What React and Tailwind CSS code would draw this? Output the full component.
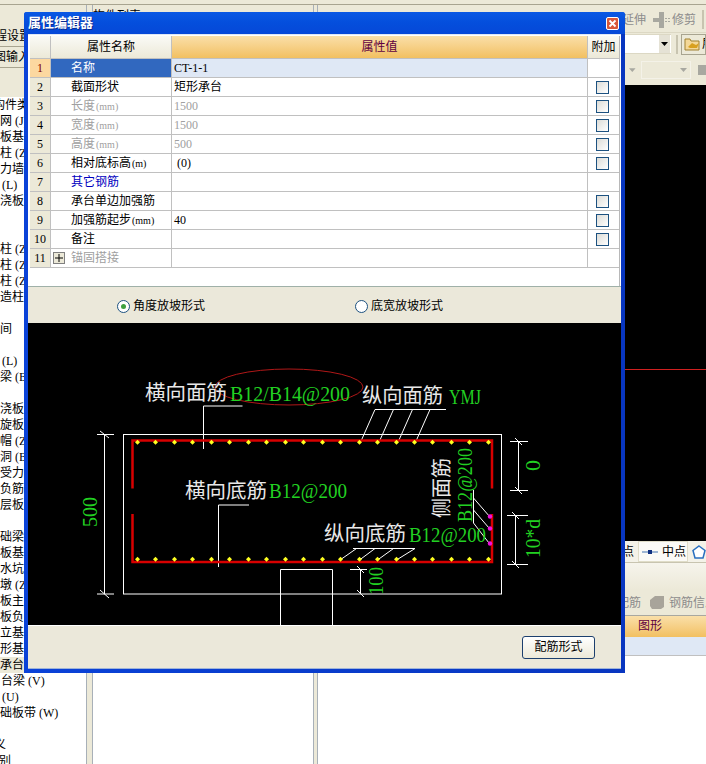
// 左侧构件树，dialog 盖住了右半边
const treeRows = [
  ['构件类型', -7], ['钢筋网 (J)', -24], ['现浇板基础', -24], ['框架柱 (Z)', -24], ['剪力墙', -12], ['(L)', 2], ['现浇板', -12], [''], [''],
  ['框架柱 (Z)', -24], ['暗柱 (Z)', -12], ['端柱 (Z)', -12], ['构造柱', -12], [''], ['空间', -12], [''],
  ['(L)', 2], ['连梁 (B)', -12], [''], ['现浇板', -12], ['螺旋板', -12], ['柱帽 (Z)', -12], ['板洞 (B)', -12], ['板受力', -12], ['板负筋', -12], ['楼层板', -12], [''],
  ['基础梁', -12], ['筏板基础', -12], ['集水坑', -12], ['柱墩 (Z)', -12], ['筏板主筋', -12], ['筏板负筋', -12], ['独立基础', -12], ['条形基础', -12], ['桩承台', -12, true],
  ['台梁 (V)', 1], ['桩 (U)', -13], ['基础板带 (W)', -12], [''], ['定义', -18], ['类别', -13],
]

const attrRows = [
  { no: 1, name: '名称', value: 'CT-1-1', selected: true },
  { no: 2, name: '截面形状', value: '矩形承台', check: true },
  { no: 3, name: '长度', unit: '(mm)', value: '1500', check: true, muted: true },
  { no: 4, name: '宽度', unit: '(mm)', value: '1500', check: true, muted: true },
  { no: 5, name: '高度', unit: '(mm)', value: '500', check: true, muted: true },
  { no: 6, name: '相对底标高', unit: '(m)', value: ' (0)', check: true },
  { no: 7, name: '其它钢筋', value: '', blue: true },
  { no: 8, name: '承台单边加强筋', value: '', check: true },
  { no: 9, name: '加强筋起步', unit: '(mm)', value: '40', check: true },
  { no: 10, name: '备注', value: '', check: true },
  { no: 11, name: '锚固搭接', value: '', muted: true, plus: true },
]

const dotsX = [137.5, 155.5, 174.5, 192.5, 211.5, 229.5, 248.5, 266.5, 285.5, 303.5, 322.5, 340.5, 359.5, 377.5, 396.5, 414.5, 432.5, 451.5, 469.5, 488.5]

function Checkbox() {
  return <div className="w-[13px] h-[13px] border border-[#1c5180] bg-gradient-to-br from-[#dcdcd7] to-white" />
}

function AttrRow({ row }) {
  const nameColor = row.selected ? 'bg-[#3168bf] text-white' : row.blue ? 'text-[#0000c0]' : row.muted ? 'text-[#a0a0a0]' : 'text-black'
  return (
    <div className={`flex h-[19px] border-b border-[#c0c0c0] text-[12px] leading-[19px] ${row.selected ? 'bg-[#dfe8f5]' : 'bg-white'}`}>
      <div className={`w-[21px] shrink-0 text-center ${row.selected ? 'bg-[#fcd8a0] text-[#800000]' : 'bg-[#ece9d8] text-black'} border-r border-[#c0c0c0]`}>{row.no}</div>
      <div className={`w-[121px] shrink-0 flex items-center border-r border-[#c0c0c0] ${nameColor}`}>
        <div className="w-[20px] shrink-0 pl-[2px]">
          {row.plus && (
            <div className="w-[12px] h-[12px] border border-[#808080] bg-[#ece9d8] flex items-center justify-center">
              <svg width="8" height="8" viewBox="0 0 8 8"><path d="M0 4H8M4 0V8" stroke="#000" strokeWidth="1" /></svg>
            </div>
          )}
        </div>
        <span className="whitespace-nowrap">{row.name}</span>
        {row.unit && <span className="ml-[1px] text-[10px] whitespace-nowrap">{row.unit}</span>}
      </div>
      <div className={`w-[416px] shrink-0 pl-[2px] whitespace-pre border-r border-[#c0c0c0] ${row.muted ? 'text-[#a0a0a0]' : 'text-black'}`}>{row.value}</div>
      <div className="flex-1 flex items-center justify-center bg-white pr-[2px]">{row.check && <Checkbox />}</div>
    </div>
  )
}

function Radio({ on, label }) {
  return (
    <div className="flex items-center gap-[3px] text-[12px] text-black">
      <div className="w-[13px] h-[13px] rounded-full border border-[#1c5180] bg-white flex items-center justify-center">
        {on && <div className="w-[5px] h-[5px] rounded-full bg-[#3fa03f]" />}
      </div>
      {label}
    </div>
  )
}

function Diagram() {
  const green = '#22d022'
  const cjk = { fill: '#e8e8e8', fontSize: 20.5 }
  const latin = { fill: green, fontSize: 22 }
  return (
    <svg className="block w-[593px] h-[302px]" viewBox="28 323 593 302">
      <rect x="28" y="323" width="593" height="302" fill="#000" />
      <g stroke="#fff" fill="none" strokeWidth="1">
        <rect x="123.5" y="434.5" width="378" height="159.5" />
        <path d="M203.5 406H242.5M203.5 406V449M218.5 505H249M218.5 505V567" />
        <path d="M375 409.5H446M375 409.5L361.5 440M393.5 409.5L380 440M412.5 409.5L399 440M430 409.5L416.5 440" />
        <path d="M353 548.5H415M356.5 548.5L340 560M375 548.5L359.5 560M393.5 548.5L377.5 560M415 548.5L396.5 560" />
        <path d="M280.5 625V569.5H332.5V625" />
        <path d="M104.5 434.5V594M97 434.5H114M97 594H114M100 431L109 438M100 590L109 598" />
        <path d="M518.5 441.5V490.5M510 441.5H528M510 490.5H528M515 438L522 445M515 487L522 494" />
        <path d="M515.5 515.5V564.5M507 515.5H528M507 564.5H528M512 512L519 519M512 561L519 568" />
        <path d="M360.5 569V594M350 569.5H367M357 566L364 573M357 590L364 597" />
        <path d="M473.5 490V523M473.5 498L490 517M473.5 510L489 528M473.5 523L489 543" />
      </g>
      <ellipse cx="289" cy="387" rx="74" ry="18" fill="none" stroke="#b01818" strokeWidth="1" />
      <path d="M132.5 488.5V440.5H492V488.5M132.5 514V562H492V514" fill="none" stroke="#d80000" strokeWidth="2.5" />
      {dotsX.map(x => (
        <g key={x} fill="#ffff20">
          <path d={`M${x} 439.8l2.5 2.5l-2.5 2.5l-2.5 -2.5z`} />
          <path d={`M${x} 556.8l2.5 2.5l-2.5 2.5l-2.5 -2.5z`} />
        </g>
      ))}
      {[516.5, 528.5, 543.5].map(y => <circle key={y} cx="490" cy={y} r="2.2" fill="#f010e0" />)}

      <text x="145" y="400" textLength="82" lengthAdjust="spacingAndGlyphs" {...cjk}>横向面筋</text>
      <text x="230" y="401" textLength="120" lengthAdjust="spacingAndGlyphs" {...latin}>B12/B14@200</text>
      <text x="362" y="403" textLength="81" lengthAdjust="spacingAndGlyphs" {...cjk}>纵向面筋</text>
      <text x="449" y="403.5" textLength="32" lengthAdjust="spacingAndGlyphs" {...latin}>YMJ</text>
      <text x="185" y="498" textLength="82" lengthAdjust="spacingAndGlyphs" {...cjk}>横向底筋</text>
      <text x="269" y="498" textLength="78" lengthAdjust="spacingAndGlyphs" {...latin}>B12@200</text>
      <text x="324" y="541" textLength="82" lengthAdjust="spacingAndGlyphs" {...cjk}>纵向底筋</text>
      <text x="409" y="541.5" textLength="77" lengthAdjust="spacingAndGlyphs" {...latin}>B12@200</text>

      <text transform="translate(449 518) rotate(-90)" textLength="60" lengthAdjust="spacingAndGlyphs" {...cjk}>侧面筋</text>
      <text transform="translate(471.5 522) rotate(-90)" textLength="74" lengthAdjust="spacingAndGlyphs" {...latin}>B12@200</text>
      <text transform="translate(97 527) rotate(-90)" textLength="30" lengthAdjust="spacingAndGlyphs" {...latin}>500</text>
      <text transform="translate(540 471) rotate(-90)" {...latin}>0</text>
      <text transform="translate(540 558) rotate(-90)" textLength="39" lengthAdjust="spacingAndGlyphs" {...latin}>10*d</text>
      <text transform="translate(383 595) rotate(-90)" textLength="28" lengthAdjust="spacingAndGlyphs" {...latin}>100</text>
    </svg>
  )
}

function PropertyDialog() {
  return (
    <div className="absolute left-[24px] top-[12px] w-[601px] h-[661px] flex flex-col rounded-t-[3px] bg-gradient-to-r from-[#0a42d8] to-[#0836c0] px-[4px] pb-[4px] shadow-[inset_0_1px_0_#3a7af0]">
      <div className="h-[22px] shrink-0 -mx-[4px] px-[4px] rounded-t-[3px] flex items-center justify-between bg-gradient-to-b from-[#0a58e4] via-[#044edc] to-[#0648d8]">
        <span className="text-[13px] font-bold text-white [text-shadow:1px_1px_0_#0a2a90]">属性编辑器</span>
        <div className="w-[13px] h-[13px] mr-[2px] rounded-[2px] border border-white bg-[#d8583a] flex items-center justify-center">
          <svg width="9" height="9" viewBox="0 0 9 9"><path d="M1.5 1.5L7.5 7.5M7.5 1.5L1.5 7.5" stroke="#fff" strokeWidth="1.8" /></svg>
        </div>
      </div>

      <div className="flex-1 flex flex-col bg-[#ebe8da] border-t border-[#dfe8f5] border-b border-b-[#9fb4d8] min-h-0">
        <div className="h-[252px] shrink-0 bg-white pl-[2px] pr-[1px] pt-[1px] border-b border-[#9fb0a8]">
          <div className="h-full border-r border-[#b8b8b8]">
            <div className="flex h-[23px] border-b border-[#c0c0c0] text-[12px] leading-[22px]">
              <div className="w-[21px] shrink-0 bg-gradient-to-b from-[#fafaf6] to-[#ece9d8] border-r border-[#c0c0c0]" />
              <div className="w-[121px] shrink-0 text-center text-black bg-gradient-to-b from-[#fafaf6] to-[#ece9d8] border-r border-[#c0c0c0]">属性名称</div>
              <div className="w-[416px] shrink-0 text-center text-[#600040] bg-gradient-to-b from-[#fadfa8] to-[#f2c060] border-r border-[#c0c0c0]">属性值</div>
              <div className="flex-1 text-center text-black bg-gradient-to-b from-[#fafaf6] to-[#ece9d8]">附加</div>
            </div>
            {attrRows.map(row => <AttrRow key={row.no} row={row} />)}
          </div>
        </div>
        <div className="h-[36px] shrink-0 flex items-center pl-[89px] pt-[2px] gap-[150px]">
          <Radio on label="角度放坡形式" />
          <Radio label="底宽放坡形式" />
        </div>
        <Diagram />
        <div className="flex-1 flex items-center justify-end pr-[26px] border-t border-white">
          <button className="w-[73px] h-[23px] rounded-[3px] border border-[#1c3f6e] bg-gradient-to-b from-white to-[#ece9d8] text-[12px] text-black">配筋形式</button>
        </div>
      </div>
    </div>
  )
}

function RightPanel() {
  return (
    <div className="flex-1 min-w-0 flex flex-col text-[12px] overflow-hidden">
      <div className="h-[28px] shrink-0 bg-[#ece9d8] flex items-center pl-[304px] pt-[2px] text-[#8c8c8c] whitespace-nowrap border-b border-[#dcd8c4]">
        <span className="w-[31px]">延伸</span>
        <svg className="w-[18px] h-[16px]" viewBox="0 0 18 16"><path d="M0 6h6V0h5v16H6v-6H0zM12 6h2v1h-2zM15 6h2v1h-2zM12 9h2v1h-2zM15 9h2v1h-2z" fill="#a8a8a0" /></svg>
        <span className="ml-[1px]">修剪</span>
        <div className="ml-[6px] w-[2px] h-[19px] border-x border-[#c8c4b0]" />
      </div>
      <div className="h-[22px] shrink-0 bg-[#ece9d8] flex items-center pl-[306px]">
        <div className="w-[47px] h-[20px] bg-white flex items-center justify-end pr-[1px] border-y border-[#dcd8c4] overflow-hidden">
          <div className="w-[11px] h-[18px] bg-[#e5e2d5] flex items-center justify-center">
            <svg width="7" height="4" viewBox="0 0 7 4"><path d="M0 0h7L3.5 4z" fill="#000" /></svg>
          </div>
        </div>
        <div className="ml-[5px] w-[2px] h-[19px] border-x border-[#c8c4b0]" />
        <div className="ml-[3px] flex-1 h-[21px] border border-[#a8a490] flex items-center pl-[2px] gap-[2px] overflow-hidden text-black whitespace-nowrap">
          <svg className="shrink-0" width="16" height="16" viewBox="0 0 16 16">
            <path d="M1 3h5l1 2h8v9H1z" fill="#f4d898" stroke="#a08030" />
            <path d="M4 11l4-4 4 2 3-2-2 5H6z" fill="#d8a020" />
          </svg>
          <span>层间</span>
        </div>
      </div>
      <div className="h-[30px] shrink-0 bg-[#ece9d8] flex items-center pl-[311px] gap-[4px]">
        <svg width="7" height="4" viewBox="0 0 7 4"><path d="M0 0h7L3.5 4z" fill="#a8a8a0" /></svg>
        <div className="ml-[1px] w-[53px] h-[18px] border border-[#f4f2e8] flex items-center justify-end pr-[3px]">
          <svg width="7" height="4" viewBox="0 0 7 4"><path d="M0 0h7L3.5 4z" fill="#a8a8a0" /></svg>
        </div>
        <div className="ml-[3px] w-[9px] h-[10px] bg-[#a8a8a0]" />
      </div>
      <div className="h-[456px] shrink-0 bg-black flex flex-col pt-[284px]">
        <div className="h-px bg-[#d02020]" />
      </div>
      <div className="h-[22px] shrink-0 bg-[#f4f2e8] flex items-center pl-[304px] gap-[4px] border-b border-[#c8c4b0] whitespace-nowrap text-black">
        <span className="w-[12px]">点</span>
        <div className="w-[50px] shrink-0 flex items-center gap-[4px] bg-[#fbfaf6] border border-[#e0ddc8] h-[21px] pl-[3px]">
          <svg width="16" height="6" viewBox="0 0 16 6"><path d="M0 3h16" stroke="#7f9fc8" strokeWidth="1.5" /><rect x="6" y="1" width="4" height="4" fill="#103080" /></svg>
          <span>中点</span>
        </div>
        <svg className="shrink-0" width="14" height="14" viewBox="0 0 14 14"><path d="M7 1l6 4.5L11 13H3L1 5.5z" fill="#fff" stroke="#2a70c0" strokeWidth="1.5" /></svg>
      </div>
      <div className="h-[27px] shrink-0 bg-gradient-to-b from-[#f6f4ec] to-[#ece9d8]" />
      <div className="h-[26px] shrink-0 bg-[#ece9d8] flex items-center pl-[299px] text-[#8c8c8c] whitespace-nowrap border-b border-[#a8a8a0]">
        <span className="w-[24px]">配筋</span>
        <svg className="shrink-0 ml-[8px] mr-[4px]" width="16" height="15" viewBox="0 0 16 15"><path d="M1 5l5-4h9v11l-3 2H3L1 11z" fill="#a8a49a" /></svg>
        <span>钢筋信息</span>
      </div>
      <div className="h-[21px] shrink-0 bg-gradient-to-b from-[#fadfa8] to-[#f2c060] pl-[320px] text-[#600040] leading-[21px]">图形</div>
      <div className="h-[19px] shrink-0 bg-[#dfe8f5] border-b border-[#c0c0c0]" />
      <div className="flex-1 bg-white" />
    </div>
  )
}

export default function App() {
  return (
    <div className="relative w-[706px] h-[764px] overflow-hidden bg-white font-['Liberation_Serif','Noto_Sans_CJK_SC',serif]">
      <div className="flex flex-col h-full">
        <div className="h-[5px] shrink-0 bg-[#ece9d8] border-b border-[#a8a490]" />
        <div className="flex-1 flex min-h-0">
          <div className="w-[86px] shrink-0 flex flex-col overflow-hidden text-[12px] text-black">
            <div className="h-[92px] shrink-0 bg-[#ece9d8] flex flex-col pt-[21px] whitespace-nowrap">
              <div className="h-[21px] leading-[20px] border-b border-[#a8a490]"><span className="inline-block -ml-[17px]">工程设置</span></div>
              <div className="h-[21px] leading-[20px] border-b border-[#a8a490]"><span className="inline-block -ml-[18px]">绘图输入</span></div>
            </div>
            {treeRows.map(([text, offset, active], i) => (
              <div key={i} className={`h-[16px] shrink-0 leading-[16px] whitespace-nowrap ${active ? 'bg-[#ece9d8]' : ''}`}>
                <span className="inline-block" style={{ marginLeft: offset }}>{text}</span>
              </div>
            ))}
          </div>
          <div className="w-[7px] shrink-0 bg-[#ece9d8] border-x border-[#a8b0b8]" />
          <div className="w-[220px] shrink-0 flex flex-col">
            <div className="h-[14px] shrink-0 bg-[#ece9d8] text-[12px] border-b border-[#a8a490] overflow-hidden leading-[22px] whitespace-nowrap">构件列表</div>
            <div className="flex-1 bg-white" />
          </div>
          <div className="w-[5px] shrink-0 bg-[#ece9d8] border-x border-[#a8b0b8]" />
          <RightPanel />
        </div>
      </div>
      <PropertyDialog />
    </div>
  )
}
